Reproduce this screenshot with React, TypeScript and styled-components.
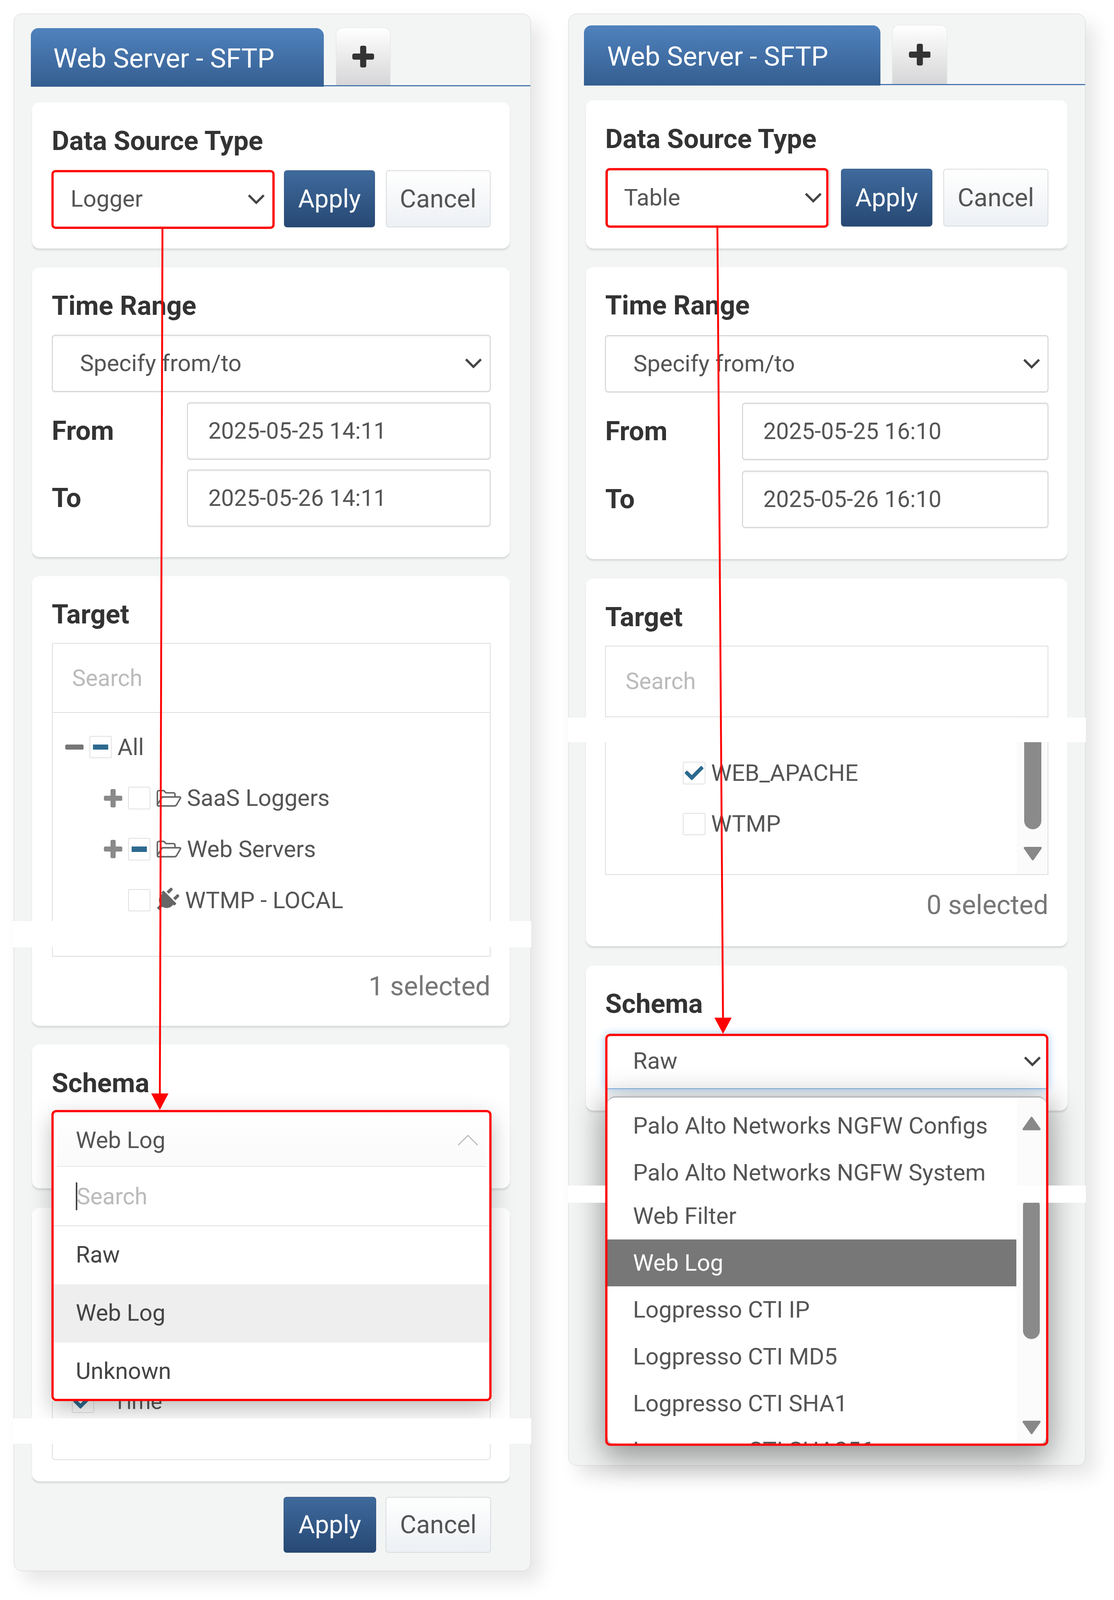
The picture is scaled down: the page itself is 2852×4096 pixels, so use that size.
import React from "react";
import styled, { createGlobalStyle } from "styled-components";
import { FaCheck, FaPlug } from "react-icons/fa";

// all sizes below are reference pixels, #root zoom brings them down to the window
const GlobalStyle = createGlobalStyle`
  html, body { margin: 0; padding: 0; background: #fff; }
  body { font-family: Roboto, "Liberation Sans", sans-serif; color: #555; overflow-x: hidden; }
  #root { zoom: 0.9606; }
  * { box-sizing: border-box; }
`;

const Page = styled.div`
  position: relative;
  display: flex;
  align-items: flex-start;
  gap: 100px;
  width: 2969px;
  height: 4264px;
  padding: 36px 0 0 36px;
`;

const Panel = styled.div<{ $w: number; $h: number }>`
  position: relative;
  width: ${(p) => p.$w}px;
  height: ${(p) => p.$h}px;
  background: #f3f5f5;
  border: 2px solid #d2d4d4;
  border-radius: 22px;
  box-shadow: 24px 28px 50px rgba(0, 0, 0, 0.1);
`;

const TabBar = styled.div<{ $left: number; $top: number; $h: number }>`
  display: flex;
  align-items: flex-end;
  gap: 32px;
  height: ${(p) => p.$h}px;
  margin: ${(p) => p.$top}px 0 0 ${(p) => p.$left}px;
  border-bottom: 4px solid #4c78ad;
`;

const ActiveTab = styled.div<{ $w: number; $pad: number; $size: number }>`
  display: flex;
  align-items: center;
  width: ${(p) => p.$w}px;
  height: 100%;
  padding: 6px 0 0 ${(p) => p.$pad}px;
  margin-bottom: -4px;
  color: #fff;
  font-size: ${(p) => p.$size}px;
  border-radius: 20px 20px 0 0;
  background: linear-gradient(#5082bd, #345e90);
`;

const AddTab = styled.div`
  display: flex;
  align-items: center;
  justify-content: center;
  width: 146px;
  height: calc(100% - 3px);
  color: #333;
  border: 2px solid #e2e2e2;
  border-bottom: 0;
  border-radius: 18px 18px 0 0;
  background: linear-gradient(#fff, #d6d6d8);
`;

const Glyph = styled.svg<{ $size: number }>`
  flex: none;
  width: ${(p) => p.$size}px;
  height: ${(p) => p.$size}px;
  fill: currentColor;
`;

const Card = styled.section<{ $left: number; $top: number; $w: number; $h: number; $right?: number; $pad?: number }>`
  width: ${(p) => p.$w}px;
  height: ${(p) => p.$h}px;
  margin: ${(p) => p.$top}px 0 0 ${(p) => p.$left}px;
  padding: 62px ${(p) => p.$right ?? 52}px 0 ${(p) => p.$pad ?? 53}px;
  background: #fff;
  border-radius: 20px;
  box-shadow: 0 6px 4px -1px rgba(0, 0, 0, 0.1);
`;

const Title = styled.h3<{ $gap?: number }>`
  height: 82px;
  margin: 0 0 ${(p) => p.$gap ?? 35}px;
  color: #333;
  font-size: 71.5px;
  line-height: 82px;
  font-weight: 700;
`;

const FormRow = styled.div<{ $h: number }>`
  display: flex;
  align-items: center;
  gap: 29px;
  height: ${(p) => p.$h}px;
`;

const Select = styled.div<{ $indent: number }>`
  display: flex;
  flex: 1;
  align-items: center;
  justify-content: space-between;
  height: 152px;
  padding: 0 20px 0 ${(p) => p.$indent}px;
  font-size: 62px;
  background: #fff;
  border: 3px solid #d0d0d0;
  border-radius: 8px;
  box-shadow: inset 0 5px 5px -3px rgba(0, 0, 0, 0.08), 0 2px 2px rgba(0, 0, 0, 0.08);
`;

const TimeSelect = styled(Select)`
  flex: none;
  margin-bottom: 28px;
`;

const Chevron = styled.svg`
  flex: none;
  width: 46px;
  height: 28px;
  fill: none;
  stroke: #444;
  stroke-width: 6;
`;

const UpChevron = styled(Chevron)`
  width: 56px;
  height: 32px;
  stroke: #bbb;
  stroke-width: 3;
`;

const Button = styled.div<{ $w: number; $h?: number }>`
  display: flex;
  align-items: center;
  justify-content: center;
  flex: none;
  width: ${(p) => p.$w}px;
  height: ${(p) => p.$h ?? 152}px;
  font-size: 67px;
  border-radius: 8px;
`;

const ApplyButton = styled(Button)`
  color: #fff;
  background: linear-gradient(#3f6a9c, #274873);
  border: 2px solid #2c5078;
`;

const CancelButton = styled(Button)`
  color: #555;
  background: linear-gradient(#fff, #edf0f4);
  border: 3px solid #d8dbde;
`;

const TimeGrid = styled.div<{ $label: number; $gap: number }>`
  display: grid;
  grid-template-columns: ${(p) => p.$label}px 1fr;
  row-gap: ${(p) => p.$gap}px;
  align-items: center;
`;

const FieldLabel = styled.label`
  color: #333;
  font-size: 71.5px;
  font-weight: 700;
`;

const DateInput = styled.div`
  display: flex;
  align-items: center;
  height: 152px;
  padding-left: 54px;
  font-size: 61px;
  background: #fff;
  border: 3px solid #d0d0d0;
  border-radius: 8px;
  box-shadow: inset 0 5px 5px -3px rgba(0, 0, 0, 0.08), 0 2px 2px rgba(0, 0, 0, 0.08);
`;

const TreeBox = styled.div<{ $h: number; $radius?: number }>`
  position: relative;
  display: flex;
  flex-direction: column;
  height: ${(p) => p.$h}px;
  border: 3px solid #dedede;
  border-radius: 0 0 ${(p) => p.$radius ?? 0}px ${(p) => p.$radius ?? 0}px;
`;

const TreeSearch = styled.div<{ $h: number }>`
  display: flex;
  flex: none;
  align-items: center;
  height: ${(p) => p.$h}px;
  padding-left: 52px;
  color: #bbb;
  font-size: 61px;
  border-bottom: 3px solid #dedede;
`;

const TreeRows = styled.div<{ $top: number }>`
  padding-top: ${(p) => p.$top}px;
`;

const TreeRow = styled.div<{ $indent: number }>`
  display: flex;
  align-items: center;
  height: 136px;
  padding-left: ${(p) => p.$indent}px;
  font-size: 62px;
`;

const Expander = styled.span<{ $color: string }>`
  display: flex;
  flex: none;
  width: 49px;
  margin-right: 15px;
  color: ${(p) => p.$color};
`;

const Checkbox = styled.span`
  display: flex;
  flex: none;
  align-items: center;
  justify-content: center;
  width: 60px;
  height: 60px;
  margin-right: 15px;
  color: #2c6a8f;
  font-size: 50px;
  background: #fff;
  border: 3px solid #e0e0e0;
  border-radius: 4px;
`;

const MinusMark = styled.span`
  width: 40px;
  height: 14px;
  background: #2c6a8f;
`;

const NodeIcon = styled.span<{ $w: number }>`
  display: flex;
  flex: none;
  align-items: center;
  justify-content: center;
  width: ${(p) => p.$w}px;
  margin-right: 15px;
  color: #666;
`;

const PlugIcon = styled(FaPlug)`
  width: 66px;
  height: 66px;
  margin-left: -6px;
  transform: rotate(45deg);
`;

const RowLabel = styled.span`
  margin-left: 36px;
  font-size: 58px;
`;

const SelectedCount = styled.div`
  margin-top: 39px;
  color: #777;
  font-size: 71px;
  line-height: 82px;
  text-align: right;
`;

const Track = styled.div<{ $top: number; $w: number }>`
  position: absolute;
  top: ${(p) => p.$top}px;
  right: 0;
  bottom: 0;
  width: ${(p) => p.$w}px;
  background: #fbfbfb;
`;

const Thumb = styled.div<{ $top: number; $h: number; $right: number }>`
  position: absolute;
  top: ${(p) => p.$top}px;
  right: ${(p) => p.$right}px;
  width: 45px;
  height: ${(p) => p.$h}px;
  background: #8a8a8a;
  border-radius: 23px;
`;

const ScrollArrow = styled.svg<{ $top: number; $right: number }>`
  position: absolute;
  top: ${(p) => p.$top}px;
  right: ${(p) => p.$right}px;
  width: 50px;
  height: 38px;
  fill: #888;
  stroke: #888;
  stroke-width: 6;
  stroke-linejoin: round;
`;

const MenuAnchor = styled.div`
  position: relative;
  height: 150px;
`;

const OpenSelect = styled.div`
  position: absolute;
  z-index: 3;
  top: 0;
  left: 0;
  right: -2px;
  height: 776px;
  display: flex;
  flex-direction: column;
  background: #fff;
  border-radius: 8px;
  box-shadow: 0 22px 60px rgba(0, 0, 0, 0.26);
  font-size: 61.5px;
`;

const OpenHead = styled.div`
  display: flex;
  flex: none;
  align-items: center;
  justify-content: space-between;
  height: 153px;
  margin: 0 14px;
  padding: 12px 20px 0 50px;
  background: linear-gradient(#fff, #fafafa);
  border-bottom: 3px solid #e6e6e6;
`;

const OpenSearch = styled.div`
  display: flex;
  flex: none;
  align-items: center;
  height: 158px;
  padding-left: 64px;
  color: #bbb;
  border-bottom: 3px solid #e0e0e0;
`;

const TextCaret = styled.span`
  width: 4px;
  height: 74px;
  margin-right: -2px;
  background: #444;
`;

const OpenItem = styled.div<{ $active?: boolean }>`
  display: flex;
  flex: 1;
  align-items: center;
  padding: 0 0 4px 64px;
  color: #444;
  background: ${(p) => (p.$active ? "#eee" : "#fff")};
`;

const FocusedSelect = styled(Select)`
  position: relative;
  height: 146px;
  border: 0;
  border-bottom: 3px solid #7fb2e2;
  box-shadow: 0 0 22px rgba(110, 175, 240, 0.65);
`;

const ListPopup = styled.div`
  position: absolute;
  z-index: 3;
  top: 165px;
  left: 6px;
  right: 6px;
  height: 929px;
  overflow: hidden;
  background: #fff;
  border-top: 5px solid #b9bcbe;
  border-radius: 22px;
  box-shadow: 0 24px 80px 14px rgba(0, 0, 0, 0.38);
`;

const ListRows = styled.div`
  width: 1090px;
  padding-top: 13px;
`;

const ListRow = styled.div<{ $active?: boolean; $tear?: number }>`
  display: flex;
  align-items: center;
  height: 125px;
  margin-top: ${(p) => p.$tear ?? 0}px;
  padding-left: 68px;
  font-size: 62px;
  color: ${(p) => (p.$active ? "#fff" : "#555")};
  background: ${(p) => (p.$active ? "#777" : "transparent")};
`;

const FooterRow = styled.div`
  display: flex;
  justify-content: flex-end;
  gap: 25px;
  margin-top: 41px;
  padding-right: 105px;
`;

// white strips where the screenshot was cut and joined
const TornBand = styled.div<{ $top: number; $h: number }>`
  position: absolute;
  z-index: 5;
  top: ${(p) => p.$top}px;
  left: -2px;
  right: -2px;
  height: ${(p) => p.$h}px;
  background: #fff;
`;

const Annotations = styled.svg`
  position: absolute;
  z-index: 10;
  top: 0;
  left: 0;
  width: 2969px;
  height: 4264px;
  pointer-events: none;
  fill: none;
  stroke: #f00;
  stroke-width: 6;
`;

const ArrowLine = styled.line`
  stroke-width: 5;
`;

const ArrowHead = styled.polygon`
  fill: #f00;
  stroke: none;
`;

const ChevronDown = () => (
  <Chevron viewBox="0 0 46 28">
    <polyline points="3,4 23,24 43,4" />
  </Chevron>
);

const PlusGlyph = ({ size }: { size: number }) => (
  <Glyph viewBox="0 0 50 50" $size={size}>
    <rect x="0" y="18" width="50" height="14" rx="4" />
    <rect x="18" y="0" width="14" height="50" rx="4" />
  </Glyph>
);

const MinusGlyph = ({ size }: { size: number }) => (
  <Glyph viewBox="0 0 50 50" $size={size}>
    <rect x="0" y="18" width="50" height="14" rx="4" />
  </Glyph>
);

const Triangle = ({ up, top, right }: { up?: boolean; top: number; right: number }) => (
  <ScrollArrow viewBox="0 0 50 38" $top={top} $right={right}>
    <polygon points={up ? "25,4 46,34 4,34" : "4,4 46,4 25,34"} />
  </ScrollArrow>
);

const FolderOpen = () => (
  <svg width="67" height="47" viewBox="0 0 67 47" fill="none" stroke="#666" strokeWidth="4">
    <path d="M3 40 V8 Q3 3 8 3 H20 L26 9 H46 Q50 9 50 14 V20" />
    <path d="M3 40 L14 23 Q15 20 18 20 H62 Q66 20 64 24 L54 41 Q52 44 48 44 H6 Q3 44 3 40 Z" />
  </svg>
);

const TimeCard = ({ label, gap, titleGap, from, to }: { label: number; gap: number; titleGap?: number; from: string; to: string }) => (
  <>
    <Title $gap={titleGap}>Time Range</Title>
    <TimeSelect $indent={73}>
      Specify from/to
      <ChevronDown />
    </TimeSelect>
    <TimeGrid $label={label} $gap={gap}>
      <FieldLabel>From</FieldLabel>
      <DateInput>{from}</DateInput>
      <FieldLabel>To</FieldLabel>
      <DateInput>{to}</DateInput>
    </TimeGrid>
  </>
);

const listItems = [
  "Palo Alto Networks NGFW Configs",
  "Palo Alto Networks NGFW System",
  "Web Filter",
  "Web Log",
  "Logpresso CTI IP",
  "Logpresso CTI MD5",
  "Logpresso CTI SHA1",
  "Logpresso CTI SHA256",
];

const App = () => (
  <Page>
    <GlobalStyle />

    <Panel $w={1379} $h={4151}>
      <TabBar $left={45} $top={34} $h={159}>
        <ActiveTab $w={781} $pad={60} $size={72}>Web Server - SFTP</ActiveTab>
        <AddTab><PlusGlyph size={58} /></AddTab>
      </TabBar>

      <Card $left={48} $top={43} $w={1274} $h={389}>
        <Title>Data Source Type</Title>
        <FormRow $h={156}>
          <Select $indent={48}>
            Logger
            <ChevronDown />
          </Select>
          <ApplyButton $w={242}>Apply</ApplyButton>
          <CancelButton $w={279}>Cancel</CancelButton>
        </FormRow>
      </Card>

      <Card $left={48} $top={51} $w={1274} $h={771}>
        <TimeCard label={361} gap={27} from="2025-05-25 14:11" to="2025-05-26 14:11" />
      </Card>

      <Card $left={48} $top={51} $w={1274} $h={1199}>
        <Title>Target</Title>
        <TreeBox $h={835}>
          <TreeSearch $h={184}>Search</TreeSearch>
          <TreeRows $top={23}>
            <TreeRow $indent={34}>
              <Expander $color="#777"><MinusGlyph size={49} /></Expander>
              <Checkbox><MinusMark /></Checkbox>
              All
            </TreeRow>
            <TreeRow $indent={137}>
              <Expander $color="#8a8a8a"><PlusGlyph size={49} /></Expander>
              <Checkbox />
              <NodeIcon $w={67}><FolderOpen /></NodeIcon>
              SaaS Loggers
            </TreeRow>
            <TreeRow $indent={137}>
              <Expander $color="#8a8a8a"><PlusGlyph size={49} /></Expander>
              <Checkbox><MinusMark /></Checkbox>
              <NodeIcon $w={67}><FolderOpen /></NodeIcon>
              Web Servers
            </TreeRow>
            <TreeRow $indent={201}>
              <Checkbox />
              <NodeIcon $w={62}><PlugIcon /></NodeIcon>
              WTMP - LOCAL
            </TreeRow>
          </TreeRows>
        </TreeBox>
        <SelectedCount>1 selected</SelectedCount>
      </Card>

      <Card $left={48} $top={50} $w={1274} $h={383}>
        <Title $gap={29}>Schema</Title>
        <MenuAnchor>
          <OpenSelect>
            <OpenHead>
              Web Log
              <UpChevron viewBox="0 0 56 32">
                <polyline points="2,30 28,4 54,30" />
              </UpChevron>
            </OpenHead>
            <OpenSearch><TextCaret />Search</OpenSearch>
            <OpenItem>Raw</OpenItem>
            <OpenItem $active>Web Log</OpenItem>
            <OpenItem>Unknown</OpenItem>
          </OpenSelect>
        </MenuAnchor>
      </Card>

      <Card $left={48} $top={52} $w={1274} $h={729}>
        <TreeBox $h={610} $radius={10}>
          <TreeRows $top={384}>
            <TreeRow $indent={51}>
              <Checkbox><FaCheck /></Checkbox>
              <RowLabel>Time</RowLabel>
            </TreeRow>
          </TreeRows>
        </TreeBox>
      </Card>

      <FooterRow>
        <ApplyButton $w={246} $h={149}>Apply</ApplyButton>
        <CancelButton $w={282} $h={149}>Cancel</CancelButton>
      </FooterRow>

      <TornBand $top={2418} $h={69} />
      <TornBand $top={3743} $h={68} />
    </Panel>

    <Panel $w={1378} $h={3870}>
      <TabBar $left={40} $top={27} $h={163}>
        <ActiveTab $w={790} $pad={62} $size={72}>Web Server - SFTP</ActiveTab>
        <AddTab><PlusGlyph size={58} /></AddTab>
      </TabBar>

      <Card $left={45} $top={41} $w={1284} $h={394} $right={51} $pad={52}>
        <Title>Data Source Type</Title>
        <FormRow $h={159}>
          <Select $indent={48}>
            Table
            <ChevronDown />
          </Select>
          <ApplyButton $w={244} $h={154}>Apply</ApplyButton>
          <CancelButton $w={280} $h={154}>Cancel</CancelButton>
        </FormRow>
      </Card>

      <Card $left={45} $top={50} $w={1284} $h={778} $right={51} $pad={52}>
        <TimeCard label={365} gap={29} titleGap={37} from="2025-05-25 16:10" to="2025-05-26 16:10" />
      </Card>

      <Card $left={45} $top={52} $w={1284} $h={979} $right={51} $pad={52}>
        <Title>Target</Title>
        <TreeBox $h={611}>
          <TreeSearch $h={188}>Search</TreeSearch>
          <TreeRows $top={81}>
            <TreeRow $indent={205}>
              <Checkbox><FaCheck /></Checkbox>
              WEB_APACHE
            </TreeRow>
            <TreeRow $indent={205}>
              <Checkbox />
              WTMP
            </TreeRow>
          </TreeRows>
          <Track $top={188} $w={82}>
            <Thumb $top={40} $h={259} $right={17} />
            <Triangle top={345} right={15} />
          </Track>
        </TreeBox>
        <SelectedCount>0 selected</SelectedCount>
      </Card>

      <Card $left={45} $top={52} $w={1284} $h={387} $right={51} $pad={52}>
        <Title $gap={39}>Schema</Title>
        <MenuAnchor>
          <FocusedSelect $indent={74}>
            Raw
            <ChevronDown />
          </FocusedSelect>
          <ListPopup>
            <ListRows>
              {listItems.map((item) => (
                <ListRow key={item} $active={item === "Web Log"} $tear={item === "Web Filter" ? -10 : 0}>
                  {item}
                </ListRow>
              ))}
            </ListRows>
            <Track $top={0} $w={78}>
              <Thumb $top={266} $h={378} $right={17} />
              <Triangle up top={50} right={14} />
              <Triangle top={860} right={14} />
            </Track>
          </ListPopup>
        </MenuAnchor>
      </Card>

      <TornBand $top={1875} $h={66} />
      <TornBand $top={3122} $h={46} />
    </Panel>

    <Annotations viewBox="0 0 2969 4264">
      <rect x="140" y="456" width="589" height="151" rx="8" />
      <ArrowLine x1="433" y1="608" x2="426" y2="2925" />
      <ArrowHead points="426,2958 403,2914 449,2914" />
      <rect x="140" y="2961" width="1167" height="770" rx="10" />

      <rect x="1617" y="451" width="588" height="153" rx="8" />
      <ArrowLine x1="1912" y1="606" x2="1927" y2="2725" />
      <ArrowHead points="1927,2755 1904,2712 1950,2712" />
      <rect x="1616" y="2758" width="1175" height="1092" rx="10" />
    </Annotations>
  </Page>
);

export default App;
